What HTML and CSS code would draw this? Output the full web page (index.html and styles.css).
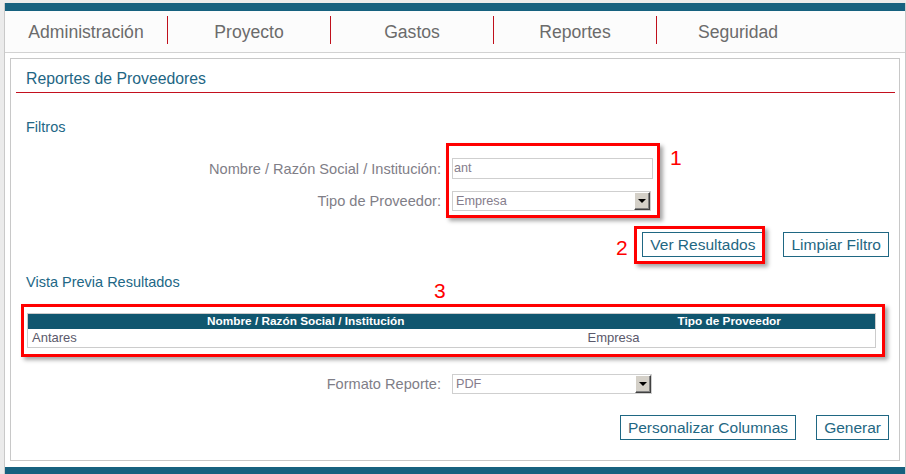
FILE: index.html
```html
<!DOCTYPE html>
<html lang="es">
<head>
<meta charset="utf-8">
<title>Reportes de Proveedores</title>
<link rel="stylesheet" href="styles.css">
</head>
<body>
<div class="page">
  <div class="topbar"></div>
  <nav class="nav">
    <a class="nav-item">Administración</a><span class="nav-sep"></span>
    <a class="nav-item">Proyecto</a><span class="nav-sep"></span>
    <a class="nav-item">Gastos</a><span class="nav-sep"></span>
    <a class="nav-item">Reportes</a><span class="nav-sep"></span>
    <a class="nav-item">Seguridad</a>
  </nav>
  <div class="content">
    <section class="panel">
      <h1 class="panel-title">Reportes de Proveedores</h1>
      <h2 class="section-title">Filtros</h2>
      <div class="form-grid filters">
        <label class="field-label">Nombre / Razón Social / Institución:</label>
        <div class="input">ant</div>
        <label class="field-label">Tipo de Proveedor:</label>
        <div class="select select-type"><span class="select-text">Empresa</span><span class="select-btn"></span></div>
      </div>
      <div class="actions actions-filter">
        <button class="btn">Ver Resultados</button>
        <button class="btn">Limpiar Filtro</button>
      </div>
      <h2 class="section-title preview-title">Vista Previa Resultados</h2>
      <table class="results">
        <colgroup><col class="col-name"><col></colgroup>
        <thead>
          <tr><th>Nombre / Razón Social / Institución</th><th>Tipo de Proveedor</th></tr>
        </thead>
        <tbody>
          <tr><td>Antares</td><td>Empresa</td></tr>
        </tbody>
      </table>
      <div class="form-grid format">
        <label class="field-label">Formato Reporte:</label>
        <div class="select select-format"><span class="select-text">PDF</span><span class="select-btn"></span></div>
      </div>
      <div class="actions actions-bottom">
        <button class="btn">Personalizar Columnas</button>
        <button class="btn">Generar</button>
      </div>

      <div class="mark mark-1"></div>
      <div class="mark mark-2"></div>
      <div class="mark mark-3"></div>
      <span class="mark-num num-1">1</span>
      <span class="mark-num num-2">2</span>
      <span class="mark-num num-3">3</span>
    </section>
  </div>
  <div class="bottombar"></div>
</div>
</body>
</html>
```

FILE: styles.css
```css
html, body {
  margin: 0;
  padding: 0;
}
body {
  background: #ebebeb;
  font-family: "Liberation Sans", Arial, sans-serif;
  overflow: hidden;
}
.page {
  margin: 3px 0 0 4px;
  width: 900px;
  border-left: 1px solid #c9c9c9;
  border-right: 1px solid #c9c9c9;
  background: #fff;
}
.topbar, .bottombar {
  height: 8px;
  background: #16617f;
}
.nav {
  display: flex;
  height: 41px;
  background: #fcfcfc;
  border-bottom: 1px solid #d2d2d2;
}
.nav-item {
  width: 162px;
  text-align: center;
  line-height: 42px;
  font-size: 17.6px;
  color: #6b6b6b;
}
.nav-sep {
  width: 1px;
  height: 28px;
  margin-top: 5px;
  background: #c0101c;
}
.content {
  padding: 5px 5px 6px 5px;
}
.panel {
  position: relative;
  border: 1px solid #c8c8c8;
  padding-bottom: 20px;
}
.panel-title {
  margin: 0 4px 0 5px;
  padding: 10px 0 3px 10px;
  font-size: 15.8px;
  line-height: 20px;
  font-weight: normal;
  color: #1e6684;
  border-bottom: 1px solid #c3101e;
}
.section-title {
  margin: 25px 0 0 15px;
  font-size: 14.5px;
  line-height: 18px;
  font-weight: normal;
  color: #226786;
}
.preview-title {
  margin-top: 16px;
}
.form-grid {
  display: grid;
  grid-template-columns: 430px 201px;
  column-gap: 11px;
  row-gap: 12px;
  align-items: center;
}
.filters {
  margin-top: 22px;
}
.format {
  margin-top: 26px;
}
.field-label {
  text-align: right;
  font-size: 14.6px;
  line-height: 18px;
  color: #7f7e87;
}
.input {
  box-sizing: border-box;
  height: 21px;
  width: 201px;
  border: 1px solid #cfcfcf;
  padding-left: 1px;
  font-size: 12.6px;
  line-height: 19px;
  color: #857d8c;
}
.select {
  box-sizing: border-box;
  display: flex;
  height: 20px;
  width: 199px;
  border: 1px solid #cfcfcf;
  background: #fff;
}
.select-format {
  width: 200px;
}
.select-text {
  flex: 1;
  padding-left: 3px;
  font-size: 12.7px;
  line-height: 18px;
  color: #857d8c;
}
.select-btn {
  position: relative;
  box-sizing: border-box;
  width: 16px;
  height: 18px;
  background: #d4d0c8;
  border-style: solid;
  border-width: 1px;
  border-color: #ffffff #404040 #404040 #ffffff;
  box-shadow: inset -1px -1px 0 #808080;
}
.select-btn::after {
  content: "";
  position: absolute;
  left: 3px;
  top: 6px;
  border-left: 4px solid transparent;
  border-right: 4px solid transparent;
  border-top: 4px solid #000;
}
.actions {
  display: flex;
  justify-content: flex-end;
  gap: 20px;
  padding-right: 10px;
}
.actions-filter {
  margin-top: 21px;
}
.actions-bottom {
  margin-top: 21px;
}
.btn {
  box-sizing: border-box;
  height: 25px;
  padding: 0 7px;
  border: 1px solid #1f6783;
  background: #fff;
  color: #1f6783;
  font-family: "Liberation Sans", Arial, sans-serif;
  font-size: 15.5px;
  line-height: 23px;
}
.results {
  margin: 22px 0 0 16px;
  width: 849px;
  table-layout: fixed;
  border-collapse: collapse;
  border: 1px solid #cccccc;
}
.col-name {
  width: 556px;
}
.results th {
  height: 15px;
  padding: 0;
  background: #10566f;
  color: #fff;
  font-size: 11.8px;
  line-height: 15px;
  font-weight: bold;
  text-align: center;
}
.results td {
  height: 18px;
  padding: 0 4px;
  font-size: 13px;
  line-height: 18px;
  color: #5b596b;
}
.mark {
  position: absolute;
  box-sizing: border-box;
  border: 3px solid #ff0000;
  box-shadow: 3px 3px 4px rgba(0, 0, 0, 0.35);
}
.mark-1 { left: 435px; top: 84px; width: 214px; height: 75px; }
.mark-2 { left: 623px; top: 167px; width: 131px; height: 38px; }
.mark-3 { left: 10px; top: 245px; width: 864px; height: 53px; }
.mark-num {
  position: absolute;
  font-size: 21px;
  line-height: 21px;
  color: #ff0000;
}
.num-1 { left: 659px; top: 88px; }
.num-2 { left: 605px; top: 178px; }
.num-3 { left: 423px; top: 221px; }
```
